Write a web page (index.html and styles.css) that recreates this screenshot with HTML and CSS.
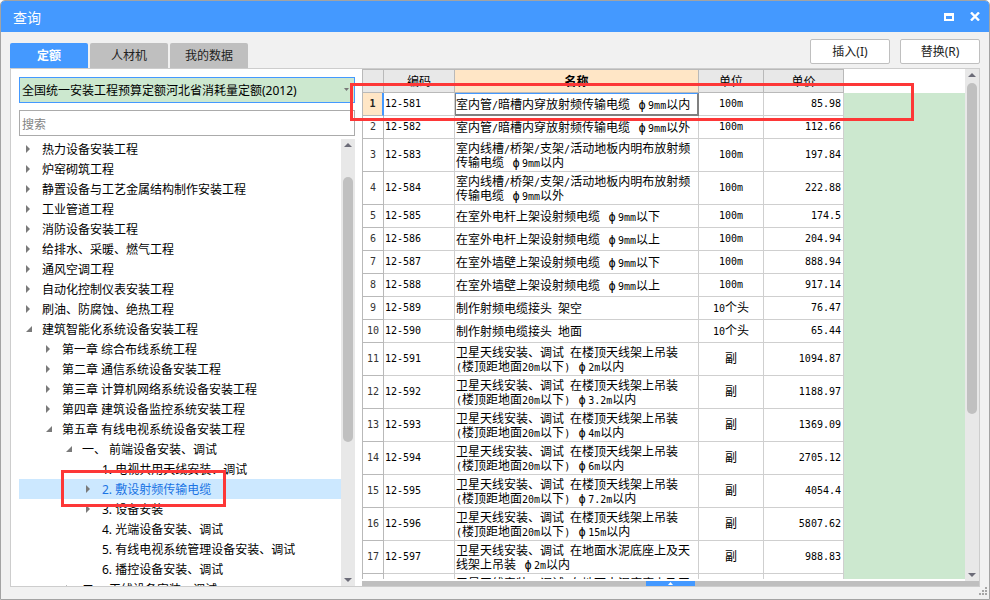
FILE: index.html
```html
<!DOCTYPE html>
<html lang="zh-CN">
<head>
<meta charset="utf-8">
<title>查询</title>
<link rel="stylesheet" href="styles.css">
</head>
<body>
<div class="window">
  <header class="titlebar">
    <h1>查询</h1>
    <button class="winbtn" aria-label="最大化"><svg width="10" height="8" viewBox="0 0 10 8"><path d="M0 0h10v8H0zM2 3v3h6V3z" fill="#fff" fill-rule="evenodd"/></svg></button>
    <button class="winbtn" aria-label="关闭"><svg width="10" height="9" viewBox="0 0 10 9"><path d="M1 .5l8 8M9 .5l-8 8" fill="none" stroke="#fff" stroke-width="2.4"/></svg></button>
  </header>
  <div class="toolbar">
    <nav class="tabs">
      <button class="tab active">定额</button>
      <button class="tab">人材机</button>
      <button class="tab">我的数据</button>
    </nav>
    <div class="actions">
      <button class="action">插入(I)</button>
      <button class="action">替换(R)</button>
    </div>
  </div>
  <main class="panel">
    <section class="side">
      <div class="combo">
        <select aria-label="定额库"><option>全国统一安装工程预算定额河北省消耗量定额(2012)</option></select>
        <svg class="caret" width="5" height="3" viewBox="0 0 5 3"><path d="M0 0h5L2.500 3z" fill="#777"/></svg>
      </div>
      <input class="search" type="text" placeholder="搜索" aria-label="搜索">
      <div class="treebox">
        <ul class="tree">
          <li class="l1"><button class="tw" aria-label="展开"></button>热力设备安装工程</li>
          <li class="l1"><button class="tw" aria-label="展开"></button>炉窑砌筑工程</li>
          <li class="l1"><button class="tw" aria-label="展开"></button>静置设备与工艺金属结构制作安装工程</li>
          <li class="l1"><button class="tw" aria-label="展开"></button>工业管道工程</li>
          <li class="l1"><button class="tw" aria-label="展开"></button>消防设备安装工程</li>
          <li class="l1"><button class="tw" aria-label="展开"></button>给排水、采暖、燃气工程</li>
          <li class="l1"><button class="tw" aria-label="展开"></button>通风空调工程</li>
          <li class="l1"><button class="tw" aria-label="展开"></button>自动化控制仪表安装工程</li>
          <li class="l1"><button class="tw" aria-label="展开"></button>刷油、防腐蚀、绝热工程</li>
          <li class="l1"><button class="tw open" aria-label="折叠"></button>建筑智能化系统设备安装工程</li>
          <li class="l2"><button class="tw" aria-label="展开"></button>第一章 综合布线系统工程</li>
          <li class="l2"><button class="tw" aria-label="展开"></button>第二章 通信系统设备安装工程</li>
          <li class="l2"><button class="tw" aria-label="展开"></button>第三章 计算机网络系统设备安装工程</li>
          <li class="l2"><button class="tw" aria-label="展开"></button>第四章 建筑设备监控系统安装工程</li>
          <li class="l2"><button class="tw open" aria-label="折叠"></button>第五章 有线电视系统设备安装工程</li>
          <li class="l3"><button class="tw open" aria-label="折叠"></button>一、 前端设备安装、调试</li>
          <li class="l4 leaf">1. 电视共用天线安装、调试</li>
          <li class="l4 selected"><button class="tw" aria-label="展开"></button>2. 敷设射频传输电缆<span class="mark mark-tree"></span></li>
          <li class="l4"><button class="tw" aria-label="展开"></button>3. 设备安装</li>
          <li class="l4 leaf">4. 光端设备安装、调试</li>
          <li class="l4 leaf">5. 有线电视系统管理设备安装、调试</li>
          <li class="l4 leaf">6. 播控设备安装、调试</li>
          <li class="l3"><button class="tw" aria-label="展开"></button>二、 天线设备安装、调试</li>
        </ul>
        <div class="scroll">
          <button class="sbtn" aria-label="向上"><svg width="8" height="4" viewBox="0 0 8 4"><path d="M0 4L4 0l4 4z" fill="#6c6c78"/></svg></button>
          <div class="track tree-track"><div class="thumb"></div></div>
          <button class="sbtn" aria-label="向下"><svg width="8" height="4" viewBox="0 0 8 4"><path d="M0 0l4 4 4-4z" fill="#6c6c78"/></svg></button>
        </div>
      </div>
    </section>
    <section class="content">
      <div class="gridbox">
        <div class="tablebox">
        <table>
          <colgroup><col class="c-no"><col class="c-code"><col class="c-name"><col class="c-unit"><col class="c-price"></colgroup>
          <thead><tr><th></th><th>编码</th><th class="cur">名称</th><th>单位</th><th>单价</th></tr></thead>
          <tbody>
          <tr class="active"><th>1</th><td>12-581</td><td>室内管<span class="en">/</span>暗槽内穿放射频传输电缆<span class="en"> </span><span class="phi">ϕ</span><span class="en">9mm</span>以内</td><td>100m</td><td>85.98</td></tr>
          <tr><th>2</th><td>12-582</td><td>室内管<span class="en">/</span>暗槽内穿放射频传输电缆<span class="en"> </span><span class="phi">ϕ</span><span class="en">9mm</span>以外</td><td>100m</td><td>112.66</td></tr>
          <tr class="tall"><th>3</th><td>12-583</td><td>室内线槽<span class="en">/</span>桥架<span class="en">/</span>支架<span class="en">/</span>活动地板内明布放射频<br>传输电缆<span class="en"> </span><span class="phi">ϕ</span><span class="en">9mm</span>以内</td><td>100m</td><td>197.84</td></tr>
          <tr class="tall"><th>4</th><td>12-584</td><td>室内线槽<span class="en">/</span>桥架<span class="en">/</span>支架<span class="en">/</span>活动地板内明布放射频<br>传输电缆<span class="en"> </span><span class="phi">ϕ</span><span class="en">9mm</span>以外</td><td>100m</td><td>222.88</td></tr>
          <tr><th>5</th><td>12-585</td><td>在室外电杆上架设射频电缆<span class="en"> </span><span class="phi">ϕ</span><span class="en">9mm</span>以下</td><td>100m</td><td>174.5</td></tr>
          <tr><th>6</th><td>12-586</td><td>在室外电杆上架设射频电缆<span class="en"> </span><span class="phi">ϕ</span><span class="en">9mm</span>以上</td><td>100m</td><td>204.94</td></tr>
          <tr><th>7</th><td>12-587</td><td>在室外墙壁上架设射频电缆<span class="en"> </span><span class="phi">ϕ</span><span class="en">9mm</span>以下</td><td>100m</td><td>888.94</td></tr>
          <tr><th>8</th><td>12-588</td><td>在室外墙壁上架设射频电缆<span class="en"> </span><span class="phi">ϕ</span><span class="en">9mm</span>以上</td><td>100m</td><td>917.14</td></tr>
          <tr><th>9</th><td>12-589</td><td>制作射频电缆接头<span class="en"> </span>架空</td><td>10<span class="cn">个头</span></td><td>76.47</td></tr>
          <tr><th>10</th><td>12-590</td><td>制作射频电缆接头<span class="en"> </span>地面</td><td>10<span class="cn">个头</span></td><td>65.44</td></tr>
          <tr class="tall"><th>11</th><td>12-591</td><td>卫星天线安装、调试<span class="en"> </span>在楼顶天线架上吊装<br><span class="en">(</span>楼顶距地面<span class="en">20m</span>以下<span class="en">) </span><span class="phi">ϕ</span><span class="en">2m</span>以内</td><td><span class="cn">副</span></td><td>1094.87</td></tr>
          <tr class="tall"><th>12</th><td>12-592</td><td>卫星天线安装、调试<span class="en"> </span>在楼顶天线架上吊装<br><span class="en">(</span>楼顶距地面<span class="en">20m</span>以下<span class="en">) </span><span class="phi">ϕ</span><span class="en">3.2m</span>以内</td><td><span class="cn">副</span></td><td>1188.97</td></tr>
          <tr class="tall"><th>13</th><td>12-593</td><td>卫星天线安装、调试<span class="en"> </span>在楼顶天线架上吊装<br><span class="en">(</span>楼顶距地面<span class="en">20m</span>以下<span class="en">) </span><span class="phi">ϕ</span><span class="en">4m</span>以内</td><td><span class="cn">副</span></td><td>1369.09</td></tr>
          <tr class="tall"><th>14</th><td>12-594</td><td>卫星天线安装、调试<span class="en"> </span>在楼顶天线架上吊装<br><span class="en">(</span>楼顶距地面<span class="en">20m</span>以下<span class="en">) </span><span class="phi">ϕ</span><span class="en">6m</span>以内</td><td><span class="cn">副</span></td><td>2705.12</td></tr>
          <tr class="tall"><th>15</th><td>12-595</td><td>卫星天线安装、调试<span class="en"> </span>在楼顶天线架上吊装<br><span class="en">(</span>楼顶距地面<span class="en">20m</span>以下<span class="en">) </span><span class="phi">ϕ</span><span class="en">7.2m</span>以内</td><td><span class="cn">副</span></td><td>4054.4</td></tr>
          <tr class="tall"><th>16</th><td>12-596</td><td>卫星天线安装、调试<span class="en"> </span>在楼顶天线架上吊装<br><span class="en">(</span>楼顶距地面<span class="en">20m</span>以下<span class="en">) </span><span class="phi">ϕ</span><span class="en">15m</span>以内</td><td><span class="cn">副</span></td><td>5807.62</td></tr>
          <tr class="tall"><th>17</th><td>12-597</td><td>卫星天线安装、调试<span class="en"> </span>在地面水泥底座上及天<br>线架上吊装<span class="en"> </span><span class="phi">ϕ</span><span class="en">2m</span>以内</td><td><span class="cn">副</span></td><td>988.83</td></tr>
          <tr class="tall"><th></th><td></td><td>卫星天线安装、调试<span class="en"> </span>在地面水泥底座上及天<br>线架上吊装</td><td></td><td></td></tr>
          </tbody>
        </table>
        <div class="filler"></div>
        </div>
        <div class="scroll">
          <button class="sbtn" aria-label="向上"><svg width="8" height="4" viewBox="0 0 8 4"><path d="M0 4L4 0l4 4z" fill="#6c6c78"/></svg></button>
          <div class="track grid-track"><div class="thumb"></div></div>
          <button class="sbtn" aria-label="向下"><svg width="8" height="4" viewBox="0 0 8 4"><path d="M0 0l4 4 4-4z" fill="#6c6c78"/></svg></button>
        </div>
        <span class="mark mark-row"></span>
      </div>
      <div class="splitter"><button class="handle" aria-label="展开面板"><svg width="5" height="3" viewBox="0 0 5 3"><path d="M0 3L2.500 0 5 3z" fill="#fff"/></svg></button></div>
    </section>
  </main>
  <svg class="grip" width="8" height="8" viewBox="0 0 8 8"><path d="M6 0h2v2H6zM3 3h2v2H3zM6 3h2v2H6zM0 6h2v2H0zM3 6h2v2H3zM6 6h2v2H6z" fill="#a6a6a6"/></svg>
</div>
</body>
</html>
```
FILE: styles.css
```css
* { box-sizing: border-box; }
body {
  margin: 0;
  background: #fff;
  color: #000;
  font: 12px/20px "Noto Sans", "Noto Sans CJK SC", sans-serif;
}
button, input, select { font: inherit; color: inherit; margin: 0; padding: 0; border: 0; background: none; }
svg { display: block; }

.window {
  position: relative;
  display: flex;
  flex-direction: column;
  height: 100vh;
  padding-bottom: 12px;
  border: 1px solid #a3a3a3;
  border-radius: 5px 5px 0 0;
  background: #f1f1f1;
  overflow: hidden;
}
.titlebar {
  flex: none;
  display: flex;
  align-items: center;
  gap: 16px;
  height: 31px;
  padding: 0 9px 0 12px;
  background: #4499ff;
  color: #fff;
}
.titlebar h1 { flex: 1; margin: 0; padding-top: 2px; font-size: 14px; font-weight: 400; }
.winbtn { display: flex; }

.toolbar {
  flex: none;
  display: flex;
  justify-content: space-between;
  align-items: flex-end;
  height: 36px;
  padding: 0 9px;
}
.tabs { display: flex; gap: 2px; }
.tab {
  width: 78px;
  height: 25px;
  padding-top: 1px;
  border-radius: 2px 2px 0 0;
  background: #bfbfbf;
  color: #222;
}
.tab.active { background: #4499ff; color: #fff; font-weight: 700; }
.actions { display: flex; gap: 10px; padding-bottom: 4px; }
.action {
  width: 80px;
  height: 25px;
  padding-top: 1px;
  border: 1px solid #bfbfbf;
  border-radius: 2px;
  background: #fff;
  color: #222;
}

.panel {
  flex: 1;
  min-height: 0;
  display: flex;
  margin: 0 9px;
  border: 1px solid #cdcdcd;
  background: #fff;
}
.side {
  flex: none;
  display: flex;
  flex-direction: column;
  width: 344px;
  padding: 8px 0 0 8px;
}
.combo { position: relative; flex: none; height: 26px; margin-bottom: 7px; }
.combo select {
  appearance: none;
  width: 100%;
  height: 26px;
  padding: 2px 2px 0;
  border: 1px solid #4499ff;
  background: #cce8cf;
}
.caret { position: absolute; right: 6px; top: 11px; }
.search {
  flex: none;
  height: 26px;
  padding: 2px 2px 0;
  margin-bottom: 3px;
  border: 1px solid #ababab;
}
.search::placeholder { color: #848484; opacity: 1; }
.treebox { flex: 1; min-height: 0; display: flex; }
.tree {
  flex: 1;
  margin: 0;
  padding: 0;
  list-style: none;
  overflow: hidden;
}
.tree li {
  position: relative;
  display: flex;
  align-items: center;
  height: 20px;
  padding-top: 2px;
  white-space: pre;
}
.l1 { padding-left: 7px; }
.l2 { padding-left: 27px; }
.l3 { padding-left: 47px; }
.l4 { padding-left: 67px; }
.tree .leaf { padding-left: 83px; }
.tree .selected { background: #cce8ff; color: #1b74e4; }
.tw { display: flex; width: 16px; height: 16px; padding-bottom: 2px; align-items: center; }
.tw::before {
  content: "";
  width: 4px;
  height: 8px;
  background: #7a7a7a;
  clip-path: polygon(0 0, 100% 50%, 0 100%);
}
.tw.open::before { width: 6px; height: 6px; clip-path: polygon(100% 0, 100% 100%, 0 100%); }

.scroll {
  flex: none;
  display: flex;
  flex-direction: column;
  width: 14px;
  background: #e8e8e8;
}
.sbtn { flex: none; height: 12px; display: flex; align-items: center; justify-content: center; }
.track { flex: 1; padding: 0 2px; }
.thumb { height: 100%; border-radius: 5px; background: #c0c0c0; }
.tree-track { padding-top: 26px; padding-bottom: 132px; }
.grid-track { padding-top: 2px; padding-bottom: 155px; }

.content {
  flex: 1;
  min-width: 0;
  display: flex;
  flex-direction: column;
  margin-left: 7px;
}
.gridbox { position: relative; flex: 1; min-height: 0; display: flex; }
.tablebox { flex: 1; min-width: 0; display: flex; margin-bottom: 2px; overflow: hidden; }
.filler { flex: 1; margin-top: 24px; background: #cce8cf; }

table {
  flex: none;
  align-self: flex-start;
  width: 482px;
  table-layout: fixed;
  border-collapse: separate;
  border-spacing: 0;
  border-left: 1px solid #b9b9b9;
  font: 12px/14px "Noto Sans CJK SC", sans-serif;
  white-space: nowrap;
}
.c-no { width: 21px; }
.c-code { width: 71px; }
.c-name { width: 244px; }
.c-unit { width: 65px; }
.c-price { width: 80px; }
th, td {
  height: 23px;
  padding: 0 2px;
  border-right: 1px solid #cfcfcf;
  border-bottom: 1px solid #cfcfcf;
  text-align: left;
}
thead th {
  height: 24px;
  border-top: 1px solid #b9b9b9;
  border-color: #b9b9b9;
  background: #e8e8e8;
  font-weight: 400;
  text-align: center;
}
thead .cur { background: #ffe6c6; font-weight: 700; }
tbody th {
  padding: 0;
  border-color: #b9b9b9;
  font: 10px/14px "DejaVu Sans Mono", monospace;
  color: #333;
  text-align: center;
}
td, .en { font-family: "DejaVu Sans Mono", "Noto Sans CJK SC", monospace; font-size: 10px; }
td:nth-child(2) { padding-left: 1px; }
td:nth-child(3) { padding: 0 1px; font: 12px/14px "Noto Sans CJK SC", sans-serif; }
td:nth-child(4) { text-align: center; }
td:nth-child(5) { text-align: right; }
.tall th, .tall td { height: 33px; }
.en { white-space: pre; line-height: 0; }
.cn { font: 12px/14px "Noto Sans CJK SC", sans-serif; }
.phi {
  display: inline-block;
  width: 12px;
  font: 12px/0 "DejaVu Sans Mono", monospace;
  text-align: center;
}
.active th { background: #ffe6c6; color: #222; font-weight: 700; border-right: 2px solid #4499ff; }
.active td:nth-child(3) {
  padding: 0;
  border: solid #808080;
  border-width: 1px 2px 2px 1px;
  border-top-color: #4499ff;
}

.splitter { flex: none; display: flex; justify-content: center; height: 5px; background: #bfbfbf; }
.handle { display: flex; align-items: center; justify-content: center; width: 49px; height: 5px; background: #4499ff; }

.mark { position: absolute; border: 3px solid #fd3737; pointer-events: none; }
.mark-row { left: -12px; right: 65px; top: 14px; height: 38px; z-index: 1; }
.mark-tree { left: 42px; top: -9px; width: 165px; height: 37px; z-index: 1; }
.grip { position: absolute; right: 2px; bottom: 4px; }
```
